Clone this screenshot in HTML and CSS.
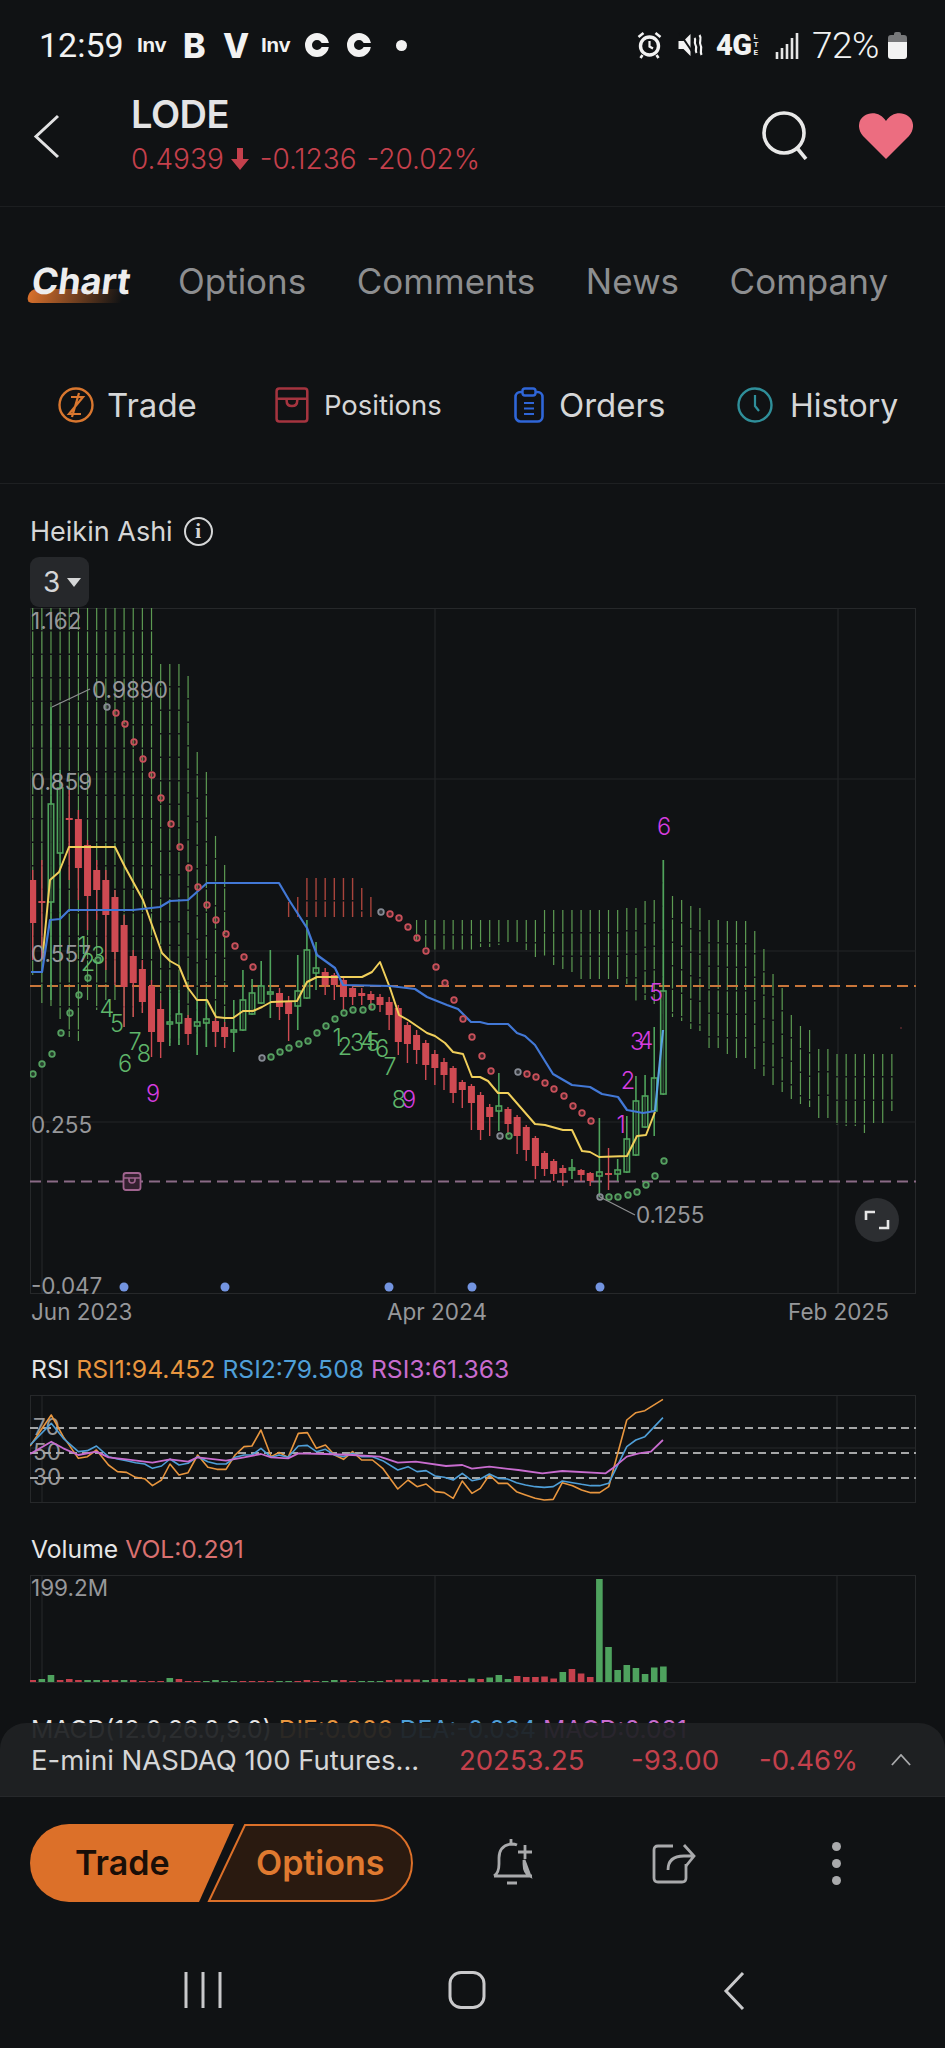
FILE: index.html
```html
<!DOCTYPE html>
<html lang="en">
<head>
    <meta charset="UTF-8">
    <meta name="viewport" content="width=device-width, initial-scale=1.0">
    <title>LODE</title>
    <link rel="stylesheet" href="styles.css">
</head>
<body>
    <div class="scroll">
        <div class="status">
            <div class="status-left">
                <span class="clock">12:59</span>
                <span class="nf-inv">Inv</span>
                <span class="nf-big">B</span>
                <span class="nf-big nf-v">V</span>
                <span class="nf-inv">Inv</span>
                <span class="nf-c"></span>
                <span class="nf-c"></span>
                <span class="nf-dot"></span>
            </div>
            <div class="status-right">
                <svg class="st-alarm" viewBox="0 0 24 28"><circle cx="12" cy="15" r="9" fill="none" stroke="#f2f2f2" stroke-width="3.4"/><path d="M12 10v5.5l3.5 2" fill="none" stroke="#f2f2f2" stroke-width="2.2"/><path d="M1 6l5-4M23 6l-5-4M5 24l-2 3M19 24l2 3" stroke="#f2f2f2" stroke-width="2.6"/></svg>
                <svg class="st-mute" viewBox="0 0 26 28"><path d="M2 10h5l7-7v22l-7-7H2z" fill="#f2f2f2"/><path d="M3 2l17 25" stroke="#101214" stroke-width="2"/><path d="M18 7c2 2-1 4 1 7s-1 5 1 8M23 4c3 4-1 7 1 10s-1 6 1 10" fill="none" stroke="#f2f2f2" stroke-width="2.2"/></svg>
                <span class="st-net"><b>4G</b><i>L<br>T<br>E</i></span>
                <svg class="st-signal" viewBox="0 0 26 27"><path d="M2 20v7M7 16v11M12 12v15M17 6v21M22 1v26" stroke="#e6e6e6" stroke-width="2.6"/></svg>
                <span class="st-batt">72%</span>
                <svg class="st-battery" viewBox="0 0 19 27"><path d="M6 2q0-2 2-2h3q2 0 2 2v1h3q3 0 3 3v4H0V6q0-3 3-3h3z" fill="#77787a"/><path d="M0 10h19v14q0 3-3 3H3q-3 0-3-3z" fill="#f2f2f2"/></svg>
            </div>
        </div>

        <header class="top">
            <svg class="back" viewBox="0 0 28 45"><path d="M25 2L3 22.500 25 43" fill="none" stroke="#e2e2e3" stroke-width="3"/></svg>
            <div class="quote">
                <div class="symbol">LODE</div>
                <div class="price">
                    <span>0.4939</span>
                    <svg class="price-arrow" viewBox="0 0 18 22"><path d="M6 0h6v11h6l-9 11-9-11h6z" fill="#c4404c"/></svg>
                    <span class="price-change">-0.1236</span>
                    <span>-20.02%</span>
                </div>
            </div>
            <svg class="search" viewBox="0 0 48 50"><circle cx="22" cy="23" r="20" fill="none" stroke="#e8e8e8" stroke-width="3.600"/><path d="M35 38l9 11" stroke="#e8e8e8" stroke-width="3.600"/></svg>
            <svg class="heart" viewBox="0 0 54 46"><path d="M27 46L4 23C-2 16-1 7 5 3c7-5 17-3 22 5C32 0 42-2 49 3c6 4 7 13 1 20z" fill="#ec6d80"/></svg>
        </header>

        <nav class="tabs">
            <span class="tab tab-active">Chart</span>
            <span class="tab">Options</span>
            <span class="tab">Comments</span>
            <span class="tab">News</span>
            <span class="tab">Company</span>
        </nav>

        <div class="actions">
            <div class="action">
                <svg class="ic" viewBox="0 0 36 36"><circle cx="18" cy="18" r="16.500" fill="none" stroke="#d9772f" stroke-width="2.400"/><path d="M13 10h12L11 27h12M21 6L14 30" fill="none" stroke="#d9772f" stroke-width="2.200"/></svg>
                <span>Trade</span>
            </div>
            <div class="action action-small">
                <svg class="ic" viewBox="0 0 32 34"><rect x="1.500" y="1.500" width="29" height="31" rx="2.500" fill="none" stroke="#a5343f" stroke-width="2.400"/><path d="M2 11h28M11 11v2q0 5 5 5t5-5v-2" fill="none" stroke="#a5343f" stroke-width="2.400"/></svg>
                <span>Positions</span>
            </div>
            <div class="action action-orders">
                <svg class="ic" viewBox="0 0 30 36"><rect x="1.500" y="5" width="27" height="29.500" rx="5" fill="none" stroke="#2f66d8" stroke-width="2.600"/><rect x="8.500" y="1.500" width="13" height="7" rx="2.500" fill="#101214" stroke="#2f66d8" stroke-width="2.400"/><path d="M10 16h10M10 21.500h10M10 27h10" stroke="#2f66d8" stroke-width="2.200"/></svg>
                <span>Orders</span>
            </div>
            <div class="action action-history">
                <svg class="ic" viewBox="0 0 36 36"><circle cx="18" cy="18" r="16.500" fill="none" stroke="#2f8f9a" stroke-width="2.400"/><path d="M18 8v11l4 5" fill="none" stroke="#2f8f9a" stroke-width="2.200"/></svg>
                <span>History</span>
            </div>
        </div>

        <section class="panel-main">
            <div class="chart-title">
                <span>Heikin Ashi</span>
                <span class="info">i</span>
            </div>
            <div class="count-pill">3<span class="caret"></span></div>
            <svg id="mainChart" class="chart-main" viewBox="30 608 886 722"></svg>
        </section>

        <div class="legend">
            <span>RSI</span>
            <span class="c-orange">RSI1:94.452</span>
            <span class="c-blue">RSI2:79.508</span>
            <span class="c-purple">RSI3:61.363</span>
        </div>
        <svg id="rsiChart" class="chart-sub" viewBox="30 1395 886 109"></svg>

        <div class="legend legend-next">
            <span>Volume</span>
            <span class="c-vol">VOL:0.291</span>
        </div>
        <svg id="volChart" class="chart-sub" viewBox="30 1576 886 109"></svg>

        <div class="legend legend-next">
            <span>MACD(12.0,26.0,9.0)</span>
            <span class="c-orange">DIF:0.006</span>
            <span class="c-blue">DEA:-0.034</span>
            <span class="c-purple">MACD:0.081</span>
        </div>

        <div class="ticker">
            <span class="ticker-name">E-mini NASDAQ 100 Futures...</span>
            <span class="ticker-last">20253.25</span>
            <span class="ticker-chg">-93.00</span>
            <span class="ticker-pct">-0.46%</span>
            <svg class="ticker-up" viewBox="0 0 22 13"><path d="M1 12L11 1l10 11" fill="none" stroke="#a9aaac" stroke-width="2"/></svg>
        </div>
    </div>

    <div class="dock">
        <div class="pill">
            <svg class="pill-bg" viewBox="0 0 384 78">
                <path d="M39 0H204L169 78H39A39 39 0 0 1 39 0z" fill="#dc7029"/>
                <path d="M215 1H344A38 38 0 0 1 344 77H179z" fill="#2a1a10" stroke="#dc7029" stroke-width="2"/>
            </svg>
            <span class="pill-trade">Trade</span>
            <span class="pill-options">Options</span>
        </div>
        <svg class="dock-bell" viewBox="0 0 46 48"><path d="M4 38q5-3 5-12v-6q0-12 12-14 4 0 6 1M34 22v4q0 9 6 12zM4 38h38" fill="none" stroke="#a9aaac" stroke-width="2.800"/><path d="M21 1v5M35 7v14M28 14h14M17 45h10" fill="none" stroke="#a9aaac" stroke-width="2.800"/></svg>
        <svg class="dock-share" viewBox="0 0 44 42"><path d="M21 4H6q-4 0-4 4v28q0 4 4 4h24q4 0 4-4V22" fill="none" stroke="#a9aaac" stroke-width="2.800"/><path d="M16 28q0-14 16-14h9M32 3l10 11-8 10" fill="none" stroke="#a9aaac" stroke-width="2.800"/></svg>
        <div class="dock-more"><span></span><span></span><span></span></div>
    </div>

    <div class="navbar">
        <svg class="nav-recent" viewBox="0 0 38 38"><path d="M2 1v36M19 1v36M36 1v36" stroke="#c9c9cb" stroke-width="3"/></svg>
        <svg class="nav-home" viewBox="0 0 38 38"><rect x="2" y="1.500" width="34" height="35" rx="11" fill="none" stroke="#c9c9cb" stroke-width="3"/></svg>
        <svg class="nav-back" viewBox="0 0 22 40"><path d="M20 2L3 20l17 18" fill="none" stroke="#c9c9cb" stroke-width="3"/></svg>
    </div>

    <script src="chart.js"></script>
</body>
</html>
```

FILE: styles.css
```css
* {
    box-sizing: border-box;
}
body {
    margin: 0;
    width: 945px;
    height: 2048px;
    overflow: hidden;
    background: #101214;
    color: #d5d6d7;
    font-family: Inter, 'Liberation Sans', sans-serif;
    display: flex;
    flex-direction: column;
}
.scroll {
    position: relative;
    height: 1797px;
    overflow: hidden;
    flex: none;
}

/* status bar */
.status {
    height: 90px;
    padding: 0 38px 0 39px;
    display: flex;
    justify-content: space-between;
    align-items: center;
    font-family: Roboto, sans-serif;
    color: #f2f2f2;
}
.status-left, .status-right {
    display: flex;
    align-items: center;
}
.clock {
    font-size: 34px;
    width: 98px;
}
.nf-inv {
    font-family: 'Liberation Sans', sans-serif;
    font-weight: 700;
    font-size: 21px;
    width: 46px;
    letter-spacing: -0.5px;
}
.nf-inv + .nf-c {
    margin-left: -2px;
}
.nf-big {
    font-family: Inter, sans-serif;
    font-weight: 800;
    font-size: 34px;
    width: 40px;
}
.nf-v {
    width: 38px;
}
.nf-c {
    position: relative;
    width: 24px;
    height: 24px;
    margin-right: 18px;
    border-radius: 50%;
    border: 7px solid #f2f2f2;
}
.nf-c::after {
    content: "";
    position: absolute;
    right: -8px;
    top: 3px;
    width: 9px;
    height: 4px;
    background: #101214;
}
.nf-dot {
    width: 11px;
    height: 11px;
    margin-left: 7px;
    border-radius: 50%;
    background: #f2f2f2;
}
.st-alarm {
    width: 25px;
    height: 28px;
    margin-right: 14px;
}
.st-mute {
    width: 27px;
    height: 28px;
    margin-right: 13px;
}
.st-net {
    display: flex;
    align-items: center;
    width: 48px;
    margin-right: 11px;
    line-height: 1;
}
.st-net b {
    font-size: 29px;
    font-weight: 900;
    letter-spacing: -0.5px;
}
.st-net i {
    font-style: normal;
    font-size: 8px;
    font-weight: 700;
    line-height: 8px;
    margin-left: 2px;
}
.st-signal {
    width: 26px;
    height: 27px;
    margin-right: 11px;
}
.st-batt {
    font-size: 37px;
    font-weight: 300;
    width: 76px;
    letter-spacing: -0.5px;
}
.st-battery {
    width: 19px;
    height: 27px;
}

/* quote header */
.top {
    height: 117px;
    padding: 0 32px 0 33px;
    display: flex;
    align-items: center;
    border-bottom: 1px solid #1c1e20;
}
.back {
    width: 28px;
    height: 45px;
    margin-top: -24px;
    flex: none;
}
.quote {
    margin-left: 70px;
    margin-top: -28px;
    flex: 1;
}
.symbol {
    font-size: 38px;
    font-weight: 600;
    line-height: 46px;
    color: #e4e4e5;
    letter-spacing: -0.500px;
}
.price {
    display: flex;
    align-items: center;
    font-size: 28px;
    font-weight: 300;
    line-height: 36px;
    color: #c4404c;
    margin-top: 4px;
}
.price-arrow {
    width: 18px;
    height: 22px;
    margin: 0 11px 0 7px;
}
.price-change {
    margin-right: 10px;
}
.search {
    width: 48px;
    height: 50px;
    margin-top: -26px;
    margin-right: 49px;
}
.heart {
    width: 54px;
    height: 46px;
    margin-top: -24px;
}

/* tabs */
.tabs {
    height: 152px;
    padding: 0 0 5px 32px;
    display: flex;
    align-items: center;
    gap: 50.500px;
    font-size: 35px;
    color: #8d8e90;
}
.tab-active {
    position: relative;
    margin-right: -3px;
    font-size: 36px;
    font-weight: 700;
    color: #ededee;
    transform: skewX(-7deg);
    z-index: 0;
}
.tab-active::after {
    content: "";
    position: absolute;
    z-index: -1;
    left: -2px;
    right: 6px;
    top: 30px;
    height: 14px;
    border-radius: 6px 0 0 6px;
    transform: skewX(-10deg);
    background: linear-gradient(90deg, #d8702c, rgba(216, 112, 44, 0));
}

/* trade, positions, orders, history */
.actions {
    height: 125px;
    padding: 28px 0 0 58px;
    display: grid;
    grid-template-columns: 217px 239px 223px auto;
    align-items: start;
    border-bottom: 1px solid #1e2022;
    font-size: 33px;
    color: #d5d6d7;
}
.action {
    height: 36px;
    display: flex;
    align-items: center;
    gap: 13px;
}
.action-small {
    font-size: 27.500px;
    gap: 15px;
}
.action-orders {
    gap: 15px;
}
.action-history {
    font-size: 32px;
    gap: 17px;
}
.ic {
    height: 36px;
    width: auto;
    flex: none;
}

/* main chart */
.panel-main {
    padding: 29px 0 0 30px;
}
.chart-title {
    height: 36px;
    display: flex;
    align-items: center;
    gap: 11px;
    font-size: 27px;
}
.info {
    width: 29px;
    height: 29px;
    border: 2px solid #d5d6d7;
    border-radius: 50%;
    font-family: 'Liberation Serif', serif;
    font-size: 21px;
    font-weight: 700;
    line-height: 25px;
    text-align: center;
}
.count-pill {
    width: 59px;
    height: 50px;
    margin: 8px 0 1px;
    padding-left: 13px;
    display: flex;
    align-items: center;
    gap: 7px;
    background: #26282b;
    border-radius: 9px;
    font-size: 28px;
}
.caret {
    border-left: 7px solid transparent;
    border-right: 7px solid transparent;
    border-top: 9px solid #d5d6d7;
}
.chart-main {
    display: block;
    width: 886px;
    height: 722px;
}
.chart-sub {
    display: block;
    width: 886px;
    height: 109px;
    margin-left: 30px;
}
.axis-label {
    font-size: 22.500px;
    fill: #96979a;
}
.seq-label {
    font-size: 23.500px;
    font-weight: 300;
    text-anchor: middle;
    dominant-baseline: central;
}

/* indicator legends */
.legend {
    height: 30px;
    margin: 24px 0 11px 31px;
    display: flex;
    align-items: center;
    gap: 7px;
    font-size: 24.700px;
    white-space: nowrap;
    color: #e6e6e7;
}
.legend-next {
    margin-top: 30px;
}
.c-orange {
    color: #e8963f;
}
.c-blue {
    color: #4f9fd8;
}
.c-purple {
    color: #c86ccf;
}
.c-vol {
    color: #d9706f;
}

/* index ticker, sits over the scrolling panels */
.ticker {
    position: absolute;
    left: 0;
    right: 0;
    bottom: 0;
    height: 74px;
    padding: 0 34px 0 31px;
    display: flex;
    align-items: center;
    border-radius: 26px 26px 0 0;
    background: rgba(31, 33, 35, 0.94);
    font-size: 27.500px;
    color: #c4404c;
    border-bottom: 1px solid #26282a;
}
.ticker-name {
    width: 428px;
    color: #d5d6d7;
    white-space: nowrap;
}
.ticker-last {
    width: 172px;
}
.ticker-chg {
    width: 128px;
}
.ticker-pct {
    width: 132px;
}
.ticker-up {
    width: 20px;
    height: 12px;
}

/* bottom dock */
.dock {
    height: 127px;
    padding-top: 27px;
    display: flex;
    align-items: flex-start;
}
.pill {
    position: relative;
    width: 384px;
    height: 78px;
    margin-left: 30px;
    flex: none;
    font-size: 34px;
    font-weight: 600;
    line-height: 78px;
}
.pill-bg {
    position: absolute;
    inset: 0;
}
.pill-trade, .pill-options {
    position: absolute;
    top: 0;
}
.pill-trade {
    left: 45px;
    color: #1a0f08;
}
.pill-options {
    left: 226px;
    color: #e07a30;
}
.dock-bell {
    width: 46px;
    height: 48px;
    margin: 14px 0 0 76px;
}
.dock-share {
    width: 44px;
    height: 42px;
    margin: 18px 0 0 116px;
}
.dock-more {
    display: flex;
    flex-direction: column;
    gap: 8px;
    margin: 18px 0 0 136px;
}
.dock-more span {
    width: 9px;
    height: 9px;
    border-radius: 50%;
    background: #a9aaac;
}

/* system nav */
.navbar {
    flex: 1;
    position: relative;
    padding-top: 47px;
    display: flex;
    align-items: flex-start;
}
.nav-recent {
    width: 38px;
    height: 38px;
    margin-left: 184px;
}
.nav-home {
    width: 38px;
    height: 38px;
    margin-left: 226px;
}
.nav-back {
    width: 22px;
    height: 40px;
    margin-left: 237px;
}
```

FILE: chart.js
```js
// all chart coordinates are page pixels, each svg viewBox starts at its own offset
const SVG_NS = "http://www.w3.org/2000/svg";
const STEP = 9.14;
const barX = i => 32.7 + STEP * i;

const GREEN = "#4fa35c";
const RED = "#cf4a52";
const CLOUD_GREEN = "#5c9a52";
const CLOUD_RED = "#a8443c";

function add(parent, tag, attrs, text) {
    const el = document.createElementNS(SVG_NS, tag);
    for (const k in attrs) el.setAttribute(k, attrs[k]);
    if (text !== undefined) el.textContent = text;
    parent.appendChild(el);
    return el;
}

function line(parent, x1, y1, x2, y2, stroke, width, dash) {
    const attrs = { x1, y1, x2, y2, stroke, "stroke-width": width };
    if (dash) attrs["stroke-dasharray"] = dash;
    return add(parent, "line", attrs);
}

function poly(parent, pts, stroke, width) {
    return add(parent, "polyline", {
        points: pts.map(p => p.join(",")).join(" "),
        fill: "none",
        stroke,
        "stroke-width": width,
        "stroke-linejoin": "round"
    });
}

function frame(svg, x, y, w, h, vx) {
    add(svg, "rect", { x: x + 0.5, y: y + 0.5, width: w - 1, height: h - 1, fill: "none", stroke: "#26282a", "stroke-width": 1 });
    vx.forEach(v => line(svg, v, y, v, y + h, "#26282a", 1));
}

/* ---------- main chart ---------- */
const main = document.getElementById("mainChart");
frame(main, 30, 608, 886, 686, [42, 435, 838]);
[779, 951, 1122].forEach(y => line(main, 30, y, 916, y, "#232527", 1));

// cloud: [index, top, bottom]
const cloudTops = [608,608,608,608,608,608,608,608,608,608,608,608,608,608,664,664,664,676,752,772,836,865];
const cloudBottoms = [975,1003,1007,1019,1037,1041,1000,1010,1000,1000,1027,1017,1013,1000,1000,1043,1045,1030,1055,1047,1047,1043];
cloudTops.forEach((t, i) => line(main, barX(i), t, barX(i), cloudBottoms[i], CLOUD_GREEN, 1.2, "22 1.5"));

const redTops = [902,897,878,878,878,878,878,878,888,897];
redTops.forEach((t, i) => line(main, barX(28 + i), t, barX(28 + i), 917, CLOUD_RED, 1.4, "22 1.5"));

[[42,940],[43,947],[44,950],[45,950],[46,950],[47,950],[48,950]].forEach(c => {
    line(main, barX(c[0]), 920, barX(c[0]), c[1], CLOUD_GREEN, 1.2, "14 1.5");
});

const tailTops = [920,920,920,920,920,920,920,910,910,910,910,910,910,910,910,910,908,908,901,900,860,896,900,906,908,920,920,921,921,921,931,949,974,988,1015,1026,1030,1049,1049,1054,1054,1054,1054,1054,1054,1054];
const tailBottoms = [947,947,945,943,942,950,957,956,965,969,972,980,980,980,979,980,984,1001,1000,1004,1014,1017,1021,1029,1031,1048,1048,1054,1058,1058,1069,1076,1085,1092,1099,1104,1107,1118,1119,1125,1126,1126,1133,1123,1124,1111];
tailTops.forEach((t, i) => line(main, barX(49 + i), t, barX(49 + i), tailBottoms[i], CLOUD_GREEN, 1.2, "22 1.5"));

// reference lines
line(main, 30, 986, 916, 986, "#c9763a", 2, "11 6");
line(main, 30, 1181.5, 916, 1181.5, "#8a6a86", 2, "11 6");

// candles: [index, bodyTop, bodyBottom, wickHigh, wickLow, up]
const candles = [
    [0,880,923,870,960,0],[1,901,903,860,960,0],[2,804,902,707,1000,1],[3,788,853,770,960,1],[4,818,820,790,880,0],
    [5,819,868,810,900,0],[6,845,896,840,930,0],[7,870,890,860,920,0],[8,880,915,870,970,0],[9,897,952,890,985,0],
    [10,925,987,915,1027,0],[11,956,983,950,1017,0],[12,969,1002,960,1013,0],[13,986,1032,980,1057,0],[14,1009,1042,1000,1058,0],
    [15,1022,1024,990,1046,1],[16,1014,1023,990,1045,1],[17,1018,1034,1015,1045,0],[18,1022,1026,1000,1055,1],[19,1019,1023,1000,1047,1],
    [20,1021,1032,1018,1047,0],[21,1027,1037,1022,1048,0],[22,1030,1032,1000,1052,1],[23,1000,1030,970,1031,1],[24,993,1014,979,1015,1],
    [25,986,1003,961,1004,1],[26,992,994,950,1018,1],[27,993,1007,988,1020,0],[28,1002,1014,996,1041,0],[29,991,1006,955,1030,1],
    [30,950,998,920,999,1],[31,968,973,942,990,1],[32,972,985,968,995,0],[33,975,985,973,1000,0],[34,980,997,978,1010,0],
    [35,988,997,985,1005,0],[36,993,996,988,1005,0],[37,994,1000,991,1010,0],[38,997,1005,994,1012,0],[39,1002,1015,997,1030,0],
    [40,1008,1042,1005,1055,0],[41,1025,1044,1022,1063,0],[42,1035,1050,1030,1064,0],[43,1043,1065,1040,1080,0],[44,1054,1068,1050,1085,0],
    [45,1062,1075,1058,1090,0],[46,1068,1093,1066,1103,0],[47,1082,1090,1080,1108,0],[48,1086,1103,1084,1130,0],[49,1095,1130,1092,1140,0],
    [50,1107,1117,1104,1136,0],[51,1106,1111,1073,1131,1],[52,1109,1124,1107,1135,0],[53,1117,1136,1115,1154,0],[54,1127,1150,1125,1161,0],
    [55,1138,1166,1136,1179,0],[56,1153,1169,1151,1176,0],[57,1161,1174,1159,1181,0],[58,1168,1173,1165,1186,0],[59,1168,1170,1159,1179,1],
    [60,1170,1175,1169,1181,0],[61,1173,1181,1172,1186,0],[62,1172,1176,1118,1197,1],[63,1173,1175,1148,1190,0],[64,1170,1174,1159,1181,1],
    [65,1139,1172,1116,1173,1],[66,1101,1155,1076,1156,1],[67,1096,1127,1075,1128,1],[68,1078,1111,1027,1136,1],[69,991,1094,860,1095,1]
];
candles.forEach(c => {
    const [i, top, bottom, high, low, up] = c;
    const x = barX(i);
    const color = up ? GREEN : RED;
    line(main, x, high, x, low, color, up ? 1.6 : 1.4);
    if (up) {
        add(main, "rect", { x: x - 2.7, y: top, width: 5.4, height: bottom - top, fill: "#101214", "fill-opacity": 0.55, stroke: color, "stroke-width": 1.6 });
    } else {
        add(main, "rect", { x: x - 3.5, y: top, width: 7, height: bottom - top, fill: color });
    }
});

// moving averages
poly(main, [[43,953],[50,880],[59,872],[69,847],[115,847],[125,867],[143,900],[162,953],[170,961],[179,966],[188,988],[197,1000],[207,1000],[216,1017],[225,1018],[233,1018],[243,1011],[253,1011],[262,1007],[271,1002],[297,1001],[307,982],[317,977],[362,977],[372,972],[380,962],[390,988],[399,1015],[408,1020],[427,1033],[435,1036],[445,1043],[453,1052],[463,1054],[472,1077],[480,1077],[488,1081],[498,1093],[508,1093],[535,1124],[545,1125],[563,1130],[572,1130],[582,1151],[590,1152],[599,1157],[627,1156],[637,1136],[646,1135],[655,1112]], "#f0cf5b", 2);
poly(main, [[31,972],[42,972],[50,920],[60,919],[69,910],[133,910],[160,907],[170,901],[188,900],[207,883],[279,883],[289,900],[307,928],[317,955],[335,968],[343,985],[390,986],[415,989],[427,997],[447,1005],[458,1009],[471,1022],[480,1022],[488,1024],[508,1024],[517,1033],[525,1036],[535,1045],[553,1074],[572,1085],[590,1087],[602,1094],[618,1097],[627,1110],[643,1113],[655,1111]], "#4278d6", 2.2);
poly(main, [[655,1111],[663,1030]], "#5aa5e0", 2.2);

// parabolic sar dots
const sarGreen = [[33,1074],[42,1064],[52,1054],[61,1033],[70,1013],[79,995],[88,978],[98,960],[509,1136],[271,1057],[280,1052],[289,1048],[299,1044],[308,1041],[317,1033],[326,1026],[335,1019],[344,1013],[353,1010],[363,1010],[372,1007],[609,1197],[618,1197],[628,1195],[637,1192],[646,1185],[655,1176],[664,1161]];
const sarRed = [[116,713],[125,724],[134,742],[143,759],[152,775],[161,798],[171,824],[180,847],[189,868],[198,887],[207,905],[216,920],[226,934],[235,946],[244,957],[253,967],[390,914],[399,918],[408,927],[417,938],[426,951],[436,967],[445,983],[454,1000],[463,1019],[472,1037],[482,1056],[491,1071],[527,1074],[536,1077],[545,1083],[554,1089],[564,1096],[573,1106],[582,1113],[591,1121]];
const sarGrey = [[107,707],[262,1058],[381,912],[518,1072],[500,1136],[600,1197]];
const dot = (p, color) => add(main, "circle", { cx: p[0], cy: p[1], r: 2.8, fill: color, "fill-opacity": 0.25, stroke: color, "stroke-width": 1.8 });
sarGreen.forEach(p => dot(p, "#55a060"));
sarRed.forEach(p => dot(p, "#c9505a"));
sarGrey.forEach(p => dot(p, "#868b94"));

// high / low callouts
line(main, 52, 707, 90, 689, "#8f9092", 1.2);
line(main, 600, 1197, 635, 1215, "#8f9092", 1.2);
add(main, "text", { x: 92, y: 698, class: "axis-label" }, "0.9890");
add(main, "text", { x: 636, y: 1223, class: "axis-label" }, "0.1255");

// price axis
[["1.162",630],["0.859",791],["0.557",963],["0.255",1134],["-0.047",1295]].forEach(l => {
    add(main, "text", { x: 31, y: l[1] - 1, class: "axis-label" }, l[0]);
});
[["Jun 2023",31],["Apr 2024",387],["Feb 2025",788]].forEach(l => {
    add(main, "text", { x: l[1], y: 1320, class: "axis-label" }, l[0]);
});

// sequential counts
const seqGreen = [["1",82,945],["2",88,962],["3",98,955],["4",107,1008],["5",117,1023],["6",125,1063],["7",135,1041],["8",144,1053],["1",337,1037],["2",345,1046],["3",357,1042],["4",368,1040],["5",373,1042],["6",382,1048],["7",390,1066],["8",399,1099]];
const seqPink = [["9",153,1093],["9",409,1099],["6",664,826],["5",656,992],["3",637,1041],["4",646,1040],["2",628,1080],["1",621,1124]];
seqGreen.forEach(s => add(main, "text", { x: s[1], y: s[2], fill: "#5fb56a", class: "seq-label" }, s[0]));
seqPink.forEach(s => add(main, "text", { x: s[1], y: s[2], fill: "#d63ee0", class: "seq-label" }, s[0]));

// event markers along the bottom
[124, 225, 389, 472, 600].forEach(x => {
    add(main, "circle", { cx: x, cy: 1287, r: 4.5, fill: "#7394e0" });
});
add(main, "circle", { cx: 901, cy: 1028, r: 1, fill: "#5a2a2e" });

// position marker
add(main, "rect", { x: 123.5, y: 1173, width: 17, height: 17, rx: 2.5, fill: "#33202f", stroke: "#a0648f", "stroke-width": 1.8 });
add(main, "path", { d: "M124 1178h16M129 1178v2q0 3 3 3t3-3v-2", fill: "none", stroke: "#a0648f", "stroke-width": 1.6 });

// fullscreen button
add(main, "circle", { cx: 877, cy: 1220, r: 22, fill: "#2c2e31" });
add(main, "path", { d: "M866 1220v-8h9M888 1220v8h-9", fill: "none", stroke: "#e6e6e6", "stroke-width": 2.6 });

/* ---------- rsi ---------- */
const rsi = document.getElementById("rsiChart");
frame(rsi, 30, 1395, 886, 108, [42, 435, 837]);
line(rsi, 30, 1448, 916, 1448, "#26282a", 1);
[["70",1428],["50",1453],["30",1478]].forEach(l => {
    add(rsi, "text", { x: 33, y: l[1] + 7, class: "axis-label" }, l[0]);
    line(rsi, 30, l[1], 916, l[1], "#a5a6a7", 2, "8 5");
});

// rsi traces were read at 1568 wide / 3x tall, 1340 is the crop top
const rsiPoints = pts => pts.map(p => [p[0] * 945 / 1568, 1340 + p[1] / 3]);
const rsi1 = [[50,318],[85,225],[105,290],[130,355],[145,350],[160,330],[180,375],[195,395],[210,397],[225,412],[240,416],[253,437],[268,420],[282,372],[297,405],[312,398],[328,345],[345,382],[360,388],[375,388],[390,345],[405,320],[418,318],[433,270],[450,350],[463,337],[478,352],[495,280],[510,278],[525,325],[540,315],[555,345],[570,358],[585,335],[600,360],[618,360],[635,385],[660,447],[677,420],[692,440],[707,432],[722,455],[737,458],[752,475],[767,423],[783,460],[797,445],[812,405],[827,430],[842,430],[857,455],[872,465],[888,475],[903,480],[918,478],[933,428],[950,437],[965,450],[980,458],[995,458],[1010,440],[1040,240],[1055,218],[1070,212],[1100,178]];
const rsi2 = [[50,315],[85,250],[105,295],[130,335],[145,332],[160,318],[180,350],[195,357],[210,362],[225,368],[240,372],[253,385],[268,378],[282,357],[297,375],[312,370],[328,350],[345,365],[360,372],[375,372],[390,352],[405,345],[418,345],[433,325],[450,352],[463,345],[478,352],[495,318],[510,316],[525,335],[540,328],[555,345],[570,350],[585,340],[600,350],[618,350],[635,362],[660,390],[677,380],[692,395],[707,392],[722,408],[737,412],[752,420],[767,400],[783,422],[797,417],[812,402],[827,415],[842,417],[857,428],[872,435],[888,440],[903,442],[918,440],[933,423],[950,428],[965,433],[980,437],[995,437],[1010,430],[1040,320],[1055,300],[1070,290],[1100,233]];
const rsi3 = [[50,342],[85,305],[105,325],[130,345],[160,335],[180,352],[210,358],[253,368],[282,358],[312,365],[328,352],[375,362],[405,352],[433,342],[450,352],[478,355],[495,340],[540,342],[585,345],[630,350],[660,368],[690,365],[740,378],[767,375],[783,386],[812,380],[860,390],[900,400],[933,393],[1005,400],[1020,380],[1040,350],[1060,340],[1080,335],[1100,300]];
poly(rsi, rsiPoints(rsi1), "#e8963f", 1.6);
poly(rsi, rsiPoints(rsi2), "#4f9fd8", 1.6);
poly(rsi, rsiPoints(rsi3), "#c86ccf", 1.8);

/* ---------- volume ---------- */
const vol = document.getElementById("volChart");
frame(vol, 30, 1576, 886, 108, [42, 435, 837]);
add(vol, "text", { x: 31, y: 1597, class: "axis-label" }, "199.2M");

// negative = down bar
const volumes = [-2,3,7,-2,-3,-2,2,2,-2,-2,2,-2,-1,-1,-1,4,-3,-1,-1,1,2,1,1,-1,-1,-1,-1,1,1,-1,-2,-1,1,2,-2,-1,1,1,1,-2,-2.5,-2.5,-2.5,2,-3,-3,-2,-2,3.5,-3,4.500,7,3,-6,-5,-5,-5.5,-3.5,10,-13,-8.5,-5,103,35,12,17,14,8,14.5,15.5];
volumes.forEach((v, i) => {
    const h = Math.abs(v);
    add(vol, "rect", { x: barX(i) - 3.3, y: 1683 - h, width: 6.6, height: h, fill: v > 0 ? "#4ea25e" : "#c4404c" });
});
```
